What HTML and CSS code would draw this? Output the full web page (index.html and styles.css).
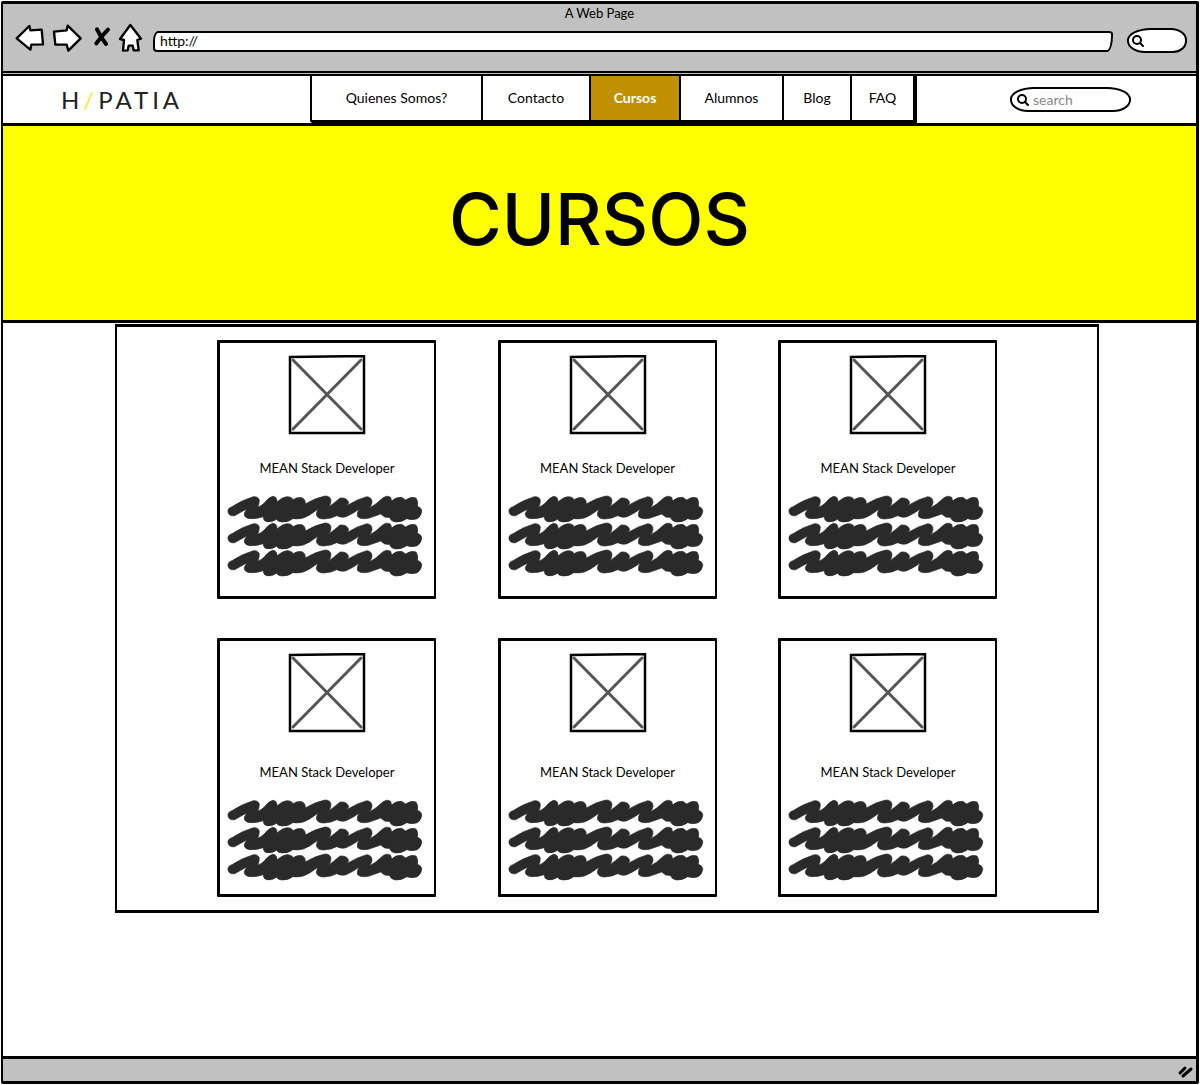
FILE: index.html
```html
<!DOCTYPE html>
<html lang="es">
<head>
<meta charset="utf-8">
<meta name="viewport" content="width=device-width, initial-scale=1">
<title>A Web Page</title>
<link rel="stylesheet" href="styles.css">
</head>
<body>
<svg class="defs" aria-hidden="true">
  <symbol id="scribble" viewBox="0 0 630 270">
    <g fill="#2a2a2a" stroke="#2a2a2a" stroke-width="2" stroke-linejoin="round">
      <path id="stroke" d="M24 66Q22 54 36 50Q66 30 100 20Q116 19 118 31Q118 42 113 51Q124 48 132 40Q146 22 158 19Q172 20 171 36Q185 22 200 20Q216 20 219 29Q232 20 246 23Q257 28 256 42Q285 24 315 18Q332 18 333 32Q333 42 326 51Q344 38 360 24Q382 22 386 38L382 46Q410 28 440 20Q457 21 456 38Q454 48 447 55Q470 42 488 24Q500 14 512 22L515 33Q528 20 545 22L557 30Q572 18 588 24Q596 34 592 49Q607 54 605 66Q602 80 592 86Q575 92 560 86Q545 97 527 96Q512 94 508 82Q494 85 482 72Q460 80 445 85Q418 89 412 78Q411 66 418 57Q398 72 378 80Q366 85 350 77Q334 86 312 87Q290 87 289 72L293 58Q270 77 250 84Q235 88 218 86Q205 97 186 96Q172 95 170 88Q155 98 140 95Q129 92 130 80Q110 87 90 86Q71 83 73 70L80 57Q60 68 44 77Q28 80 24 66Z"/>
      <use href="#stroke" y="81"/>
      <use href="#stroke" y="162"/>
    </g>
  </symbol>
  <symbol id="placeholder" viewBox="0 0 78 80">
    <path d="M2 2L76 1L76 78L2 78Z" fill="#fff" stroke="#000" stroke-width="2.5"/>
    <path d="M5 5L73 74M73 5L5 74" stroke="#555" stroke-width="3" stroke-linecap="round"/>
  </symbol>
  <symbol id="glass" viewBox="0 0 12 12">
    <circle cx="5" cy="5" r="4" fill="none" stroke="#000" stroke-width="2"/>
    <path d="M8 8L11 11" stroke="#000" stroke-width="2" stroke-linecap="round"/>
  </symbol>
</svg>

<div class="window">
  <div class="chrome">
    <div class="title">A Web Page</div>
    <div class="toolbar">
      <button class="tool back" aria-label="Back"><svg viewBox="45 66 90 90" width="30" height="30"><path d="M50 112L88 75L91 88L125 86L129 130L94 131L91 146Z"/></svg></button>
      <button class="tool forward" aria-label="Forward"><svg viewBox="156 66 90 90" width="30" height="30"><path d="M162 92L200 88L203 74L242 112L205 149L200 131L166 131Z"/></svg></button>
      <button class="tool stop" aria-label="Stop"><svg viewBox="276 66 63 90" width="21" height="30"><path class="cross" d="M291 85Q302 108 318 129M324 86Q306 104 289 127"/></svg></button>
      <button class="tool home" aria-label="Home"><svg viewBox="353 66 75 90" width="25" height="30"><path d="M390 72L422 113L411 117L415 148L400 148L397 134L385 134L382 148L368 149L371 117L359 114Z"/></svg></button>
      <input class="address" type="text" value="http://" aria-label="Address">
      <label class="find"><svg width="12" height="12"><use href="#glass"/></svg><input type="text" aria-label="Web search"></label>
    </div>
  </div>

  <header class="site-header">
    <a class="logo" href="#">H<span>/</span>PATIA</a>
    <nav class="menu">
      <a href="#">Quienes Somos?</a>
      <a href="#">Contacto</a>
      <a class="active" href="#" aria-current="page">Cursos</a>
      <a href="#">Alumnos</a>
      <a href="#">Blog</a>
      <a href="#">FAQ</a>
    </nav>
    <label class="search"><svg width="12" height="12"><use href="#glass"/></svg><input type="text" placeholder="search" aria-label="Search"></label>
  </header>

  <div class="hero"><h1>CURSOS</h1></div>

  <main>
    <div class="catalog">
      <article class="card"><svg class="thumb"><use href="#placeholder"/></svg><h2>MEAN Stack Developer</h2><svg class="lines"><use href="#scribble"/></svg></article>
      <article class="card"><svg class="thumb"><use href="#placeholder"/></svg><h2>MEAN Stack Developer</h2><svg class="lines"><use href="#scribble"/></svg></article>
      <article class="card"><svg class="thumb"><use href="#placeholder"/></svg><h2>MEAN Stack Developer</h2><svg class="lines"><use href="#scribble"/></svg></article>
      <article class="card spaced"><svg class="thumb"><use href="#placeholder"/></svg><h2>MEAN Stack Developer</h2><svg class="lines"><use href="#scribble"/></svg></article>
      <article class="card spaced"><svg class="thumb"><use href="#placeholder"/></svg><h2>MEAN Stack Developer</h2><svg class="lines"><use href="#scribble"/></svg></article>
      <article class="card spaced"><svg class="thumb"><use href="#placeholder"/></svg><h2>MEAN Stack Developer</h2><svg class="lines"><use href="#scribble"/></svg></article>
    </div>
  </main>

  <footer class="status">
    <svg width="20" height="18" viewBox="0 0 20 18" aria-hidden="true"><path d="M4 11L9 6M7 14L15 7" stroke="#000" stroke-width="3" stroke-linecap="round"/></svg>
  </footer>
</div>
</body>
</html>
```
FILE: styles.css
```css
* { box-sizing: border-box; }

body {
  margin: 0;
  background: #fff;
  color: #000;
  font: 14px/20px Lato, "Open Sans", sans-serif;
}

a { color: inherit; text-decoration: none; }
input { font: inherit; color: inherit; }
svg { display: block; }

.defs { position: absolute; width: 0; height: 0; }

.window {
  display: flex;
  flex-direction: column;
  min-height: calc(100vh - 2px);
  margin: 1px;
  border: 3px solid #000;
  border-left-width: 2px;
  border-radius: 2px;
}

.chrome {
  height: 72px;
  background: #c1c1c1;
  border-bottom: 5px double #000;
}

.title { height: 18px; font-size: 13px; line-height: 18px; text-align: center; }

.toolbar {
  display: flex;
  align-items: flex-end;
  height: 31px;
  padding: 0 9px 0 12px;
}

.tool { padding: 0; border: 0; background: none; }
.tool path { fill: #fff; stroke: #000; stroke-width: 7; stroke-linejoin: round; }
.tool .cross { fill: none; stroke-width: 12; stroke-linecap: round; }
.forward { margin-left: 7px; }
.stop { margin-left: 10px; }
.home { margin-left: 5px; }

.address {
  flex: 1;
  min-width: 0;
  height: 21px;
  margin: 0 14px 1px 10px;
  padding: 0 5px 2px;
  background: #fff;
  border: 2px solid #000;
  border-radius: 5px 4px 6px 4px / 10px 3px 16px 4px;
}

.find, .search {
  display: flex;
  align-items: center;
  background: #fff;
  border: 2px solid #000;
}

.find {
  width: 60px;
  height: 25px;
  padding-left: 3px;
  border-radius: 24px 16px 14px 18px / 12px;
}

.find input, .search input {
  flex: 1;
  min-width: 0;
  padding: 0;
  border: 0;
  outline: 0;
  background: none;
}

.site-header {
  display: flex;
  align-items: center;
  height: 50px;
  border-bottom: 3px solid #000;
}

.logo {
  width: 307px;
  padding-left: 58px;
  color: #222;
  font-size: 24px;
  letter-spacing: 4px;
}

.logo span { color: #ffe63b; }

.menu {
  display: grid;
  grid-template-columns: 171px 108px 90px 103px 68px 63px;
  align-self: stretch;
  border: solid #000;
  border-width: 0 2px 3px 2px;
  border-bottom-left-radius: 3px;
}

.menu a {
  display: flex;
  align-items: center;
  justify-content: center;
  border-right: 2px solid #000;
}

.menu .active { background: #c09000; color: #fff; font-weight: 700; }

.search {
  width: 121px;
  height: 25px;
  margin: 0 65px 0 auto;
  padding: 0 8px 0 5px;
  gap: 4px;
  border-radius: 24px 24px 18px 18px / 12px;
}

.search input::placeholder { color: #888; opacity: 1; }

.hero {
  padding: 45px 0 53px;
  background: #ff0;
  border-bottom: 3px solid #000;
  text-align: center;
}

.hero h1 {
  margin: 0;
  font: 500 72px/96px Inter, Lato, sans-serif;
}

main { flex: 1; padding: 1px 97px 24px 112px; }

.catalog {
  display: grid;
  grid-template-columns: repeat(3, 219px);
  justify-content: space-between;
  row-gap: 39px;
  padding: 13px 100px;
  border: 3px solid #000;
  border-width: 3px 2px;
}

.card {
  display: flex;
  flex-direction: column;
  align-items: center;
  height: 259px;
  padding-top: 12px;
  background: #fff;
  border: 3px solid #000;
  border-right-width: 2px;
  border-radius: 1px;
}

.thumb { width: 78px; height: 80px; }
.card h2 { margin: 23px 0 12px; font-size: 13px; line-height: 20px; font-weight: 400; }
.spaced h2 { margin-top: 29px; }
.lines { width: 210px; height: 90px; margin-right: 4px; }

.status {
  display: flex;
  justify-content: flex-end;
  height: 25px;
  padding-top: 3px;
  background: #c1c1c1;
  border-top: 3px solid #000;
}
```
